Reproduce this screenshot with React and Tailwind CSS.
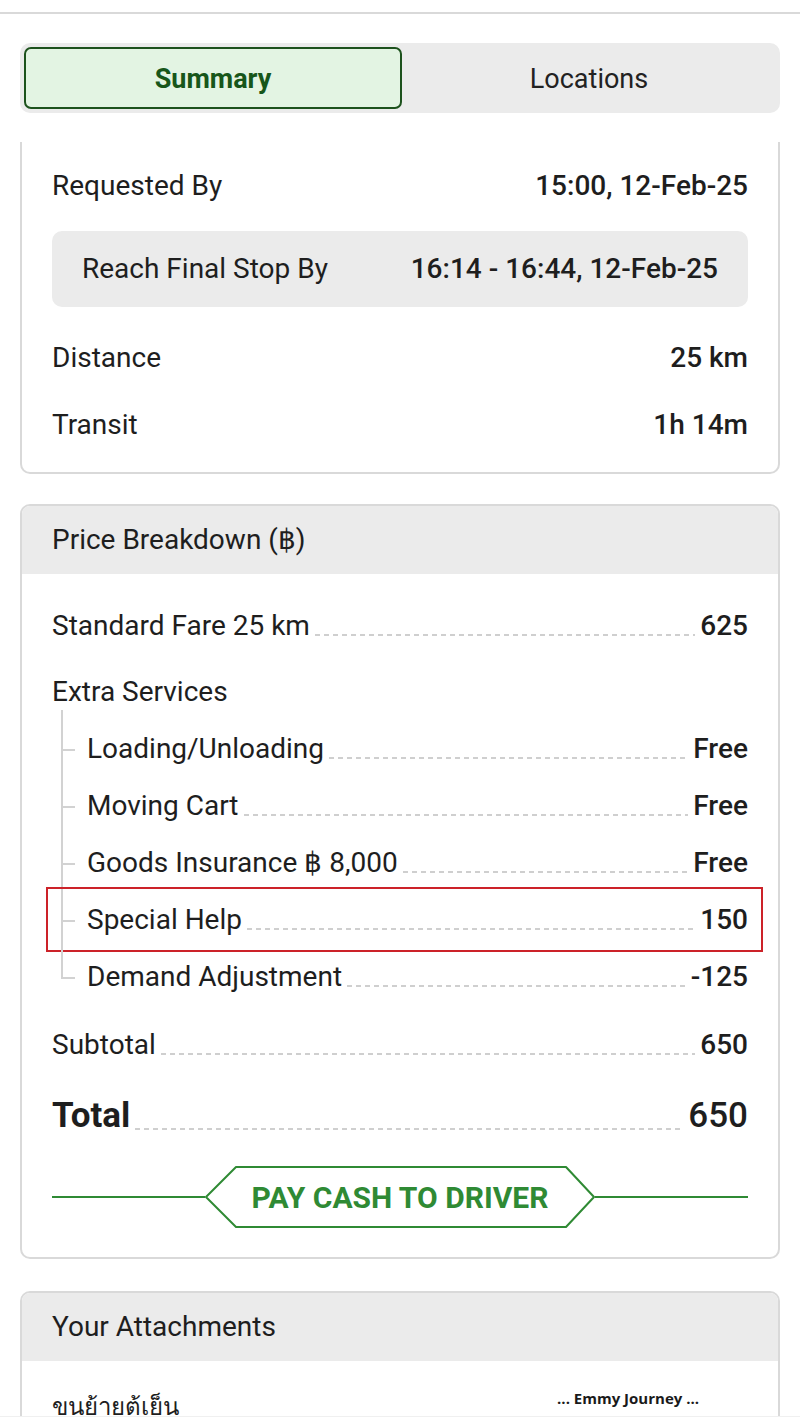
import React from 'react';

const leader =
  'mx-[5px] h-[2px] flex-1 bg-[linear-gradient(to_right,#cfcfcf_55%,transparent_55%)] bg-[length:9px_2px] bg-repeat-x';

function PriceRow({ label, value, bold }) {
  return (
    <div className={`flex items-center ${bold ? 'h-[70px]' : 'h-[57px]'}`}>
      <span className={bold ? 'text-[35px] font-bold' : ''}>{label}</span>
      <span className={`${leader} ${bold ? 'translate-y-[13px]' : 'translate-y-[9px]'}`} />
      <span className={bold ? 'text-[35px] font-medium' : 'font-medium'}>{value}</span>
    </div>
  );
}

function TreeItem({ label, value, first, last, highlight }) {
  return (
    <div className="relative flex h-[57px] items-center">
      <div className="relative w-[35px] self-stretch">
        <span
          className={`absolute left-[9px] w-[2px] bg-[#d2d2d2] ${first ? '-top-[10px]' : 'top-0'} ${
            last ? 'h-[calc(50%+1px)]' : 'bottom-0'
          }`}
        />
        <span className="absolute left-[9px] top-1/2 h-[2px] w-[14px] bg-[#d2d2d2]" />
      </div>
      <span>{label}</span>
      <span className={`${leader} translate-y-[9px]`} />
      <span className="font-medium">{value}</span>
      {highlight ? (
        <div className="pointer-events-none absolute -left-[6px] -right-[15px] -top-[4px] -bottom-[4px] border-2 border-[#cc2229]" />
      ) : null}
    </div>
  );
}

export default function App() {
  return (
    <div className="relative h-[1428px] overflow-hidden bg-white font-[family-name:Roboto,sans-serif] text-[28px] text-[#1e1e1e]">
      {/* top app bar edge */}
      <div className="h-[12px] bg-white" />
      <div className="h-[2px] bg-[#d9d9d9]" />

      <div className="px-[20px] pt-[29px]">
        {/* Tabs */}
        <div className="flex h-[70px] rounded-[10px] bg-[#ebebeb] p-[4px]">
          <div className="flex flex-1 items-center justify-center rounded-[7px] border-2 border-[#1d521d] bg-[#e3f4e3] pt-[3px] text-[27px] font-bold text-[#17561a]">
            Summary
          </div>
          <div className="flex flex-1 items-center justify-center pt-[3px] text-[27px] text-[#222]">Locations</div>
        </div>

        {/* Trip summary card (scrolled under tabs) */}
        <div className="mt-[29px] rounded-b-[10px] border-x-2 border-b-2 border-[#d9d9d9] px-[30px] pt-[10px] pb-[14px]">
          <div className="flex h-[67px] items-center justify-between">
            <span>Requested By</span>
            <span className="font-medium">15:00, 12-Feb-25</span>
          </div>
          <div className="mt-[12px] flex h-[76px] items-center justify-between rounded-[10px] bg-[#ebebeb] px-[30px]">
            <span>Reach Final Stop By</span>
            <span className="font-medium">16:14 - 16:44, 12-Feb-25</span>
          </div>
          <div className="mt-[17px] flex h-[67px] items-center justify-between">
            <span>Distance</span>
            <span className="font-medium">25 km</span>
          </div>
          <div className="flex h-[67px] items-center justify-between">
            <span>Transit</span>
            <span className="font-medium">1h 14m</span>
          </div>
        </div>

        {/* Price breakdown */}
        <div className="mt-[30px] overflow-hidden rounded-[10px] border-2 border-[#d9d9d9]">
          <div className="flex h-[68px] items-center bg-[#ebebeb] px-[30px]">Price Breakdown (฿)</div>
          <div className="px-[30px] pt-[23px] pb-[29px]">
            <PriceRow label="Standard Fare 25 km" value="625" />
            <div className="mt-[9px] flex h-[57px] items-center">Extra Services</div>
            <div>
              <TreeItem label="Loading/Unloading" value="Free" first />
              <TreeItem label="Moving Cart" value="Free" />
              <TreeItem label="Goods Insurance ฿ 8,000" value="Free" />
              <TreeItem label="Special Help" value="150" highlight />
              <TreeItem label="Demand Adjustment" value="-125" last />
            </div>
            <div className="mt-[11px]">
              <PriceRow label="Subtotal" value="650" />
            </div>
            <div className="mt-[8px]">
              <PriceRow label="Total" value="650" bold />
            </div>

            {/* Payment badge */}
            <div className="mt-[15px] flex h-[62px] items-center">
              <span className="h-[2px] flex-1 bg-[#2f8a34]" />
              <div className="relative flex h-[62px] w-[390px] items-center justify-center">
                <svg className="absolute inset-0" width="390" height="62" viewBox="0 0 390 62" fill="none">
                  <path
                    d="M31 1 H361 L389 31 L361 61 H31 L1 31 Z"
                    stroke="#2f8a34"
                    strokeWidth="2"
                    strokeLinejoin="round"
                  />
                </svg>
                <span className="relative text-[30px] font-bold text-[#2f8a34]">PAY CASH TO DRIVER</span>
              </div>
              <span className="h-[2px] flex-1 bg-[#2f8a34]" />
            </div>
          </div>
        </div>

        {/* Attachments */}
        <div className="mt-[32px] overflow-hidden rounded-t-[10px] border-2 border-[#d9d9d9]">
          <div className="flex h-[68px] items-center bg-[#ebebeb] px-[30px]">Your Attachments</div>
          <div className="flex items-start justify-between px-[30px] pt-[22px] pb-[40px]">
            <span className="mt-[8px] font-[family-name:'Noto_Sans','DejaVu_Sans',sans-serif] text-[24px] leading-[30px]">
              ขนย้ายตู้เย็น
            </span>
            <span className="mr-[49px] mt-[4px] font-[family-name:'Open_Sans',sans-serif] text-[15px] font-bold text-[#1a1a1a]">
              ... Emmy Journey ...
            </span>
          </div>
        </div>
      </div>

      {/* bottom overlay strip */}
      <div className="absolute inset-x-0 bottom-0 h-[12px] border-t border-[#f0f0f0] bg-white" />
    </div>
  );
}
